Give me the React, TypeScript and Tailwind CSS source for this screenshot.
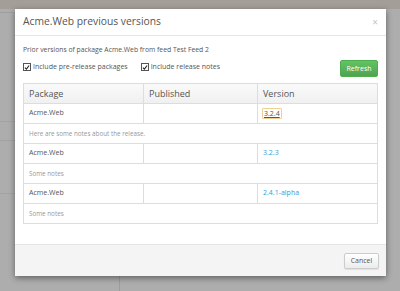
import React from "react";

function Check({ label }: { label: string }) {
  return (
    <label className="flex items-center gap-[2px] text-[7px] text-[#555]">
      <span className="w-[8px] h-[8px] border border-[#555] bg-white flex items-center justify-center">
        <svg width="7" height="7" viewBox="0 0 8 8">
          <path d="M1.2 4.2 L3.2 6.2 L6.8 1.4" stroke="#222" strokeWidth="1.4" fill="none" />
        </svg>
      </span>
      {label}
    </label>
  );
}

const rows = [
  { pkg: "Acme.Web", ver: "3.2.4", notes: "Here are some notes about the release.", focus: true },
  { pkg: "Acme.Web", ver: "3.2.3", notes: "Some notes", focus: false },
  { pkg: "Acme.Web", ver: "2.4.1-alpha", notes: "Some notes", focus: false },
];

export default function App() {
  return (
    <div className="relative w-[400px] h-[291px] overflow-hidden bg-[#adadad] font-['Open_Sans',sans-serif]">
      <div className="h-[9px] bg-[#a39e97]" />
      <div className="flex">
        <div className="w-[120px] h-[282px] border-r border-[#9c9c9c] flex flex-col">
          <div className="h-[3px]" />
          <div className="h-[109px] border-t border-[#9f9f9f]" />
          <div className="h-[19px] border-t border-[#a2a2a2]" />
          <div className="h-[53px] border-t border-[#a2a2a2]" />
          <div className="flex-1 border-t border-[#a2a2a2]" />
        </div>
      </div>

      <div className="absolute left-[15px] top-[9px] w-[371px] h-[267px] bg-white shadow-[0_2px_6px_rgba(0,0,0,0.45)] flex flex-col">
        <div className="h-[27px] border-b border-[#e5e5e5] flex items-center justify-between pl-[8px] pr-[8px]">
          <span className="text-[10.3px] text-[#555]">Acme.Web previous versions</span>
          <span className="text-[10px] leading-none text-[#c4c4c4]">×</span>
        </div>
        <div className="flex-1 px-[8px] pt-[9px]">
          <div className="h-[10px] leading-[10px] text-[6.8px] text-[#555]">
            Prior versions of package Acme.Web from feed Test Feed 2
          </div>
          <div className="mt-[5px] h-[17px] flex items-center">
            <div className="flex items-center gap-[13px] -mt-[3px]">
              <Check label="Include pre-release packages" />
              <Check label="Include release notes" />
            </div>
            <button className="ml-auto h-[17px] w-[38px] rounded-[2px] border border-[#4cae4c] bg-gradient-to-b from-[#62c462] to-[#51a351] text-white text-[7px] leading-none">
              Refresh
            </button>
          </div>
          <div className="mt-[6px] border border-[#dddddd]">
            <div className="grid grid-cols-[119px_114px_1fr] h-[19px] bg-gradient-to-b from-[#fafafa] to-[#f0f0f0] text-[9px] text-[#555]">
              <div className="pl-[5px] flex items-center">Package</div>
              <div className="pl-[5px] flex items-center border-l border-[#dddddd]">Published</div>
              <div className="pl-[5px] flex items-center border-l border-[#dddddd]">Version</div>
            </div>
            {rows.map((r) => (
              <React.Fragment key={r.ver}>
                <div className="grid grid-cols-[119px_114px_1fr] h-[20px] border-t border-[#dddddd] text-[7px]">
                  <div className="pl-[5px] flex items-center text-[#555]">{r.pkg}</div>
                  <div className="border-l border-[#dddddd]" />
                  <div className="pl-[4px] flex items-center border-l border-[#dddddd]">
                    {r.focus ? (
                      <span className="px-[1px] border border-[#f0cf94] rounded-[1px] text-[#555] underline leading-[9px]">
                        {r.ver}
                      </span>
                    ) : (
                      <span className="pl-[1px] text-[#3a9ad9]">{r.ver}</span>
                    )}
                  </div>
                </div>
                <div className="h-[20px] border-t border-[#dddddd] pl-[5px] flex items-center text-[6.3px] text-[#999]">
                  {r.notes}
                </div>
              </React.Fragment>
            ))}
          </div>
        </div>
        <div className="h-[32px] border-t border-[#e5e5e5] bg-[#f4f4f4] flex items-center justify-end pr-[7px]">
          <button className="h-[16px] w-[35px] rounded-[2px] border border-[#cccccc] bg-gradient-to-b from-white to-[#ececec] text-[7px] text-[#555] leading-none shadow-[0_1px_1px_rgba(0,0,0,0.08)]">
            Cancel
          </button>
        </div>
      </div>
    </div>
  );
}
